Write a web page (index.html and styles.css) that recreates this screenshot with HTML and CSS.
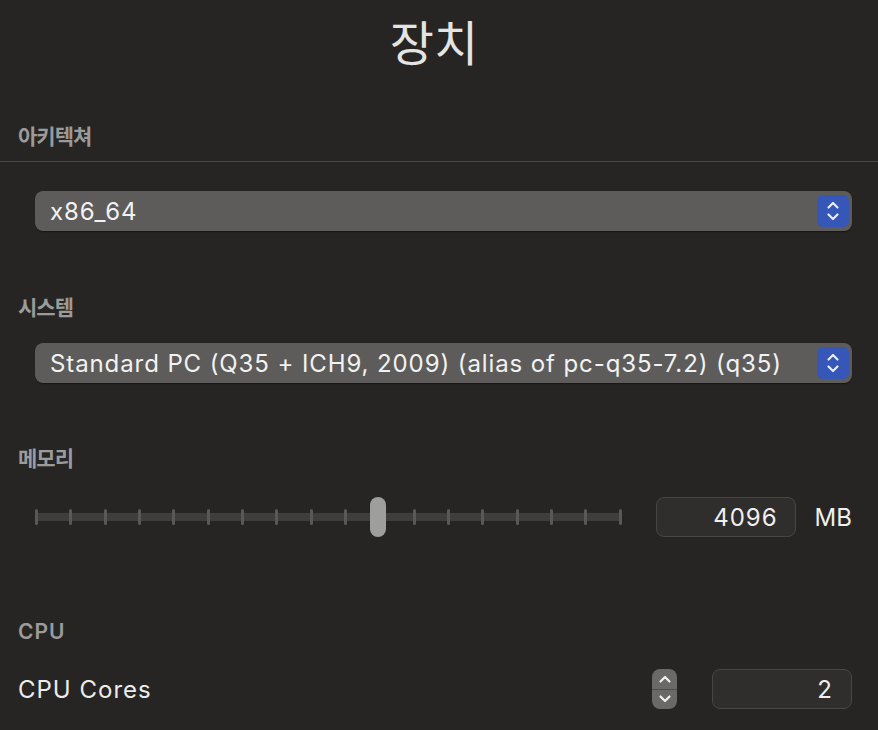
FILE: index.html
```html
<!DOCTYPE html>
<html lang="ko">
<head>
<meta charset="utf-8">
<link rel="stylesheet" href="styles.css">
</head>
<body>
<div class="page">
  <h1 class="title">장치</h1>

  <div class="label label-arch">아키텍쳐</div>
  <div class="sep"></div>

  <div class="popup popup-arch">
    <span class="popup-text">x86_64</span>
    <span class="popup-btn">
      <svg width="14" height="22" viewBox="0 0 14 22"><path d="M2.5 7.5 L7 3 L11.5 7.5 M2.5 14.5 L7 19 L11.5 14.5" fill="none" stroke="#e8ecf8" stroke-width="2.2" stroke-linecap="round" stroke-linejoin="round"/></svg>
    </span>
  </div>

  <div class="label label-sys">시스템</div>
  <div class="popup popup-sys">
    <span class="popup-text">Standard PC (Q35 + ICH9, 2009) (alias of pc-q35-7.2) (q35)</span>
    <span class="popup-btn">
      <svg width="14" height="22" viewBox="0 0 14 22"><path d="M2.5 7.5 L7 3 L11.5 7.5 M2.5 14.5 L7 19 L11.5 14.5" fill="none" stroke="#e8ecf8" stroke-width="2.2" stroke-linecap="round" stroke-linejoin="round"/></svg>
    </span>
  </div>

  <div class="label label-mem">메모리</div>
  <div class="slider-row">
    <div class="slider">
      <div class="track">
        <span class="tick"></span><span class="tick"></span><span class="tick"></span><span class="tick"></span><span class="tick"></span><span class="tick"></span>
        <span class="tick"></span><span class="tick"></span><span class="tick"></span><span class="tick"></span><span class="tick"></span><span class="tick"></span>
        <span class="tick"></span><span class="tick"></span><span class="tick"></span><span class="tick"></span><span class="tick"></span><span class="tick"></span>
      </div>
      <div class="knob"></div>
    </div>
    <div class="field field-mem">4096</div>
    <span class="unit">MB</span>
  </div>

  <div class="label label-cpu">CPU</div>
  <div class="cpu-row">
    <span class="cpu-text">CPU Cores</span>
    <div class="stepper">
      <span class="step step-up"><svg width="14" height="10" viewBox="0 0 14 10"><path d="M2.5 7.5 L7 3 L11.5 7.5" fill="none" stroke="#f0f0f0" stroke-width="2.2" stroke-linecap="round" stroke-linejoin="round"/></svg></span>
      <span class="step step-down"><svg width="14" height="10" viewBox="0 0 14 10"><path d="M2.5 2.5 L7 7 L11.5 2.5" fill="none" stroke="#f0f0f0" stroke-width="2.2" stroke-linecap="round" stroke-linejoin="round"/></svg></span>
    </div>
    <div class="field field-cpu">2</div>
  </div>
</div>
</body>
</html>
```

FILE: styles.css
```css
* { box-sizing: border-box; }
html, body {
  margin: 0;
  padding: 0;
  background: #262523;
}
body {
  width: 878px;
  height: 730px;
  overflow: hidden;
  font-family: "Inter", "Noto Sans CJK KR", sans-serif;
  color: #ececec;
}
.page {
  display: flex;
  flex-direction: column;
  padding: 0 26px 0 0;
}
.title {
  margin: 10px -16px 0 0;
  font-family: "Noto Sans CJK KR", sans-serif;
  font-weight: 400;
  font-size: 48px;
  line-height: 60px;
  text-align: center;
  color: #e4e4e4;
}
.label {
  font-family: "Noto Sans CJK KR", sans-serif;
  font-size: 21px;
  line-height: 24px;
  font-weight: 700;
  letter-spacing: -1px;
  color: #9b9b9b;
  padding-left: 18px;
}
.label-arch { margin-top: 53px; }
.sep {
  height: 1px;
  background: #4a4947;
  margin: 14px -26px 0 0;
}
.popup {
  display: flex;
  align-items: center;
  justify-content: space-between;
  height: 40px;
  margin-left: 35px;
  background: #5d5c5a;
  border-radius: 8px;
  padding: 0 3px 0 15px;
  box-shadow: 0 0.5px 1px rgba(0,0,0,0.4);
}
.popup-arch { margin-top: 29px; }
.popup-text {
  font-size: 24px;
  letter-spacing: 0.9px;
  color: #f2f2f2;
  white-space: nowrap;
}
.popup-btn {
  width: 32px;
  height: 32px;
  border-radius: 6px;
  background: #3656b8;
  display: flex;
  align-items: center;
  justify-content: center;
}
.label-sys { margin-top: 63px; }
.popup-sys { margin-top: 25px; }
.label-mem { margin-top: 62px; }

.slider-row {
  display: flex;
  align-items: center;
  margin-top: 28px;
  height: 40px;
}
.slider {
  position: relative;
  width: 587px;
  height: 40px;
  margin-left: 35px;
  display: flex;
  align-items: center;
}
.track {
  width: 100%;
  height: 8px;
  background: #3f3e3c;
  display: flex;
  justify-content: space-between;
  align-items: center;
}
.tick {
  width: 3px;
  height: 16px;
  background: #595856;
  border-radius: 1.5px;
}
.knob {
  position: absolute;
  left: 335px;
  top: 0;
  width: 16px;
  height: 40px;
  border-radius: 8px;
  background: #9e9e9d;
}
.field {
  height: 40px;
  background: #2f2e2c;
  border: 1px solid #474644;
  border-radius: 8px;
  display: flex;
  align-items: center;
  justify-content: flex-end;
  font-size: 24px;
  letter-spacing: 1px;
  color: #efefef;
}
.field-mem {
  width: 140px;
  margin-left: 34px;
  padding-right: 17px;
}
.unit {
  margin-left: 19px;
  font-size: 24px;
  color: #efefef;
}
.label-cpu {
  margin-top: 83px;
  font-family: "Inter", sans-serif;
  font-weight: 600;
  letter-spacing: 1px;
}
.cpu-row {
  display: flex;
  align-items: center;
  margin-top: 25px;
  height: 40px;
  padding-left: 18px;
}
.cpu-text {
  font-size: 24px;
  letter-spacing: 1px;
  color: #ececec;
  flex: 1;
}
.stepper {
  width: 25px;
  height: 40px;
  border-radius: 8px;
  background: #6a6967;
  display: flex;
  flex-direction: column;
  overflow: hidden;
}
.step {
  flex: 1;
  display: flex;
  align-items: center;
  justify-content: center;
}
.step-up { border-bottom: 1px solid #4e4d4b; }
.field-cpu {
  width: 140px;
  margin-left: 35px;
  padding-right: 18px;
}
```
